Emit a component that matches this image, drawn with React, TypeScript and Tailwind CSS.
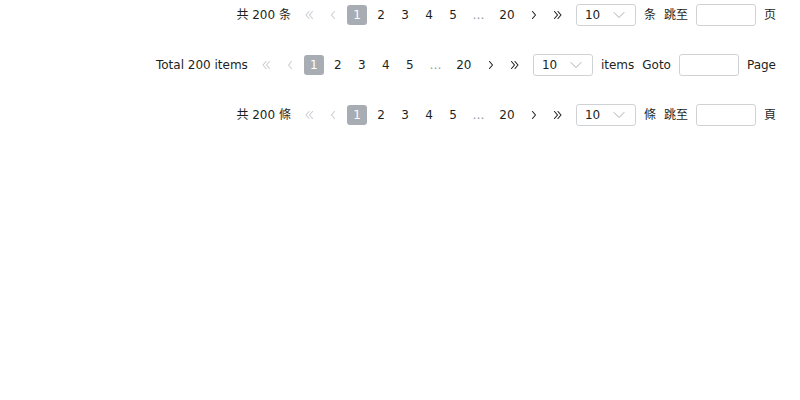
import React from 'react';

type Labels = {
  total: string;
  unit: string;
  jump: string;
  page: string;
  lang: string;
};

const rows: Labels[] = [
  { total: '共 200 条', unit: '条', jump: '跳至', page: '页', lang: 'zh-CN' },
  { total: 'Total 200 items', unit: 'items', jump: 'Goto', page: 'Page', lang: 'en' },
  { total: '共 200 條', unit: '條', jump: '跳至', page: '頁', lang: 'zh-TW' },
];

function Chevron({ dir, double, disabled }: { dir: 'left' | 'right'; double?: boolean; disabled?: boolean }) {
  const color = disabled ? '#c9ccd1' : '#1c1f23';
  const flip = dir === 'left' ? 'scale(-1,1) translate(-12,0)' : undefined;
  return (
    <svg width="12" height="12" viewBox="0 0 12 12" fill="none">
      <g transform={flip} stroke={color} strokeWidth="1.1" strokeLinecap="round" strokeLinejoin="round">
        {double ? (
          <>
            <path d="M2.5 2.5 L5.5 6 L2.5 9.5" />
            <path d="M6 2.5 L9 6 L6 9.5" />
          </>
        ) : (
          <path d="M4.5 2.5 L7.5 6 L4.5 9.5" />
        )}
      </g>
    </svg>
  );
}

function Pager({ l }: { l: Labels }) {
  const font =
    l.lang === 'zh-TW'
      ? "font-['DejaVu_Sans','Noto_Sans_CJK_TC',sans-serif]"
      : "font-['DejaVu_Sans','Noto_Sans_CJK_SC',sans-serif]";
  return (
    <div lang={l.lang} className={`flex items-center justify-end h-[22px] pr-[24px] text-[12px] text-[#1c1f23] ${font}`}>
      <span className="mr-[8px] whitespace-nowrap">{l.total}</span>
      <div className="flex items-center gap-[4px]">
        <span className="w-[20px] h-[20px] flex items-center justify-center">
          <Chevron dir="left" double disabled />
        </span>
        <span className="w-[20px] h-[20px] flex items-center justify-center">
          <Chevron dir="left" disabled />
        </span>
        <span className="w-[20px] h-[20px] rounded-[3px] bg-[#a8acb3] text-white flex items-center justify-center">1</span>
        {['2', '3', '4', '5'].map((n) => (
          <span key={n} className="w-[20px] h-[20px] flex items-center justify-center">
            {n}
          </span>
        ))}
        <span className="w-[23px] h-[20px] flex items-center justify-center text-[#8f959e]">…</span>
        <span className="w-[26px] h-[20px] flex items-center justify-center">20</span>
        <span className="w-[20px] h-[20px] flex items-center justify-center">
          <Chevron dir="right" />
        </span>
        <span className="w-[20px] h-[20px] flex items-center justify-center">
          <Chevron dir="right" double />
        </span>
      </div>
      <div className="ml-[8px] w-[60px] h-[22px] border border-[#d0d3d6] rounded-[3px] flex items-center justify-between pl-[8px] pr-[10px]">
        <span>10</span>
        <svg width="12" height="8" viewBox="0 0 12 8" fill="none">
          <path d="M1 1.5 L6 6.5 L11 1.5" stroke="#a9adb3" strokeWidth="1" strokeLinecap="round" strokeLinejoin="round" />
        </svg>
      </div>
      <span className="ml-[8px] whitespace-nowrap">{l.unit}</span>
      <span className="ml-[8px] whitespace-nowrap">{l.jump}</span>
      <input className="ml-[8px] w-[60px] h-[22px] border border-[#d0d3d6] rounded-[3px] outline-none px-[6px]" />
      <span className="ml-[8px] whitespace-nowrap">{l.page}</span>
    </div>
  );
}

export default function App() {
  return (
    <div className="w-[800px] h-[400px] bg-white flex flex-col pt-[4px] gap-[28px]">
      {rows.map((l) => (
        <Pager key={l.lang} l={l} />
      ))}
    </div>
  );
}
